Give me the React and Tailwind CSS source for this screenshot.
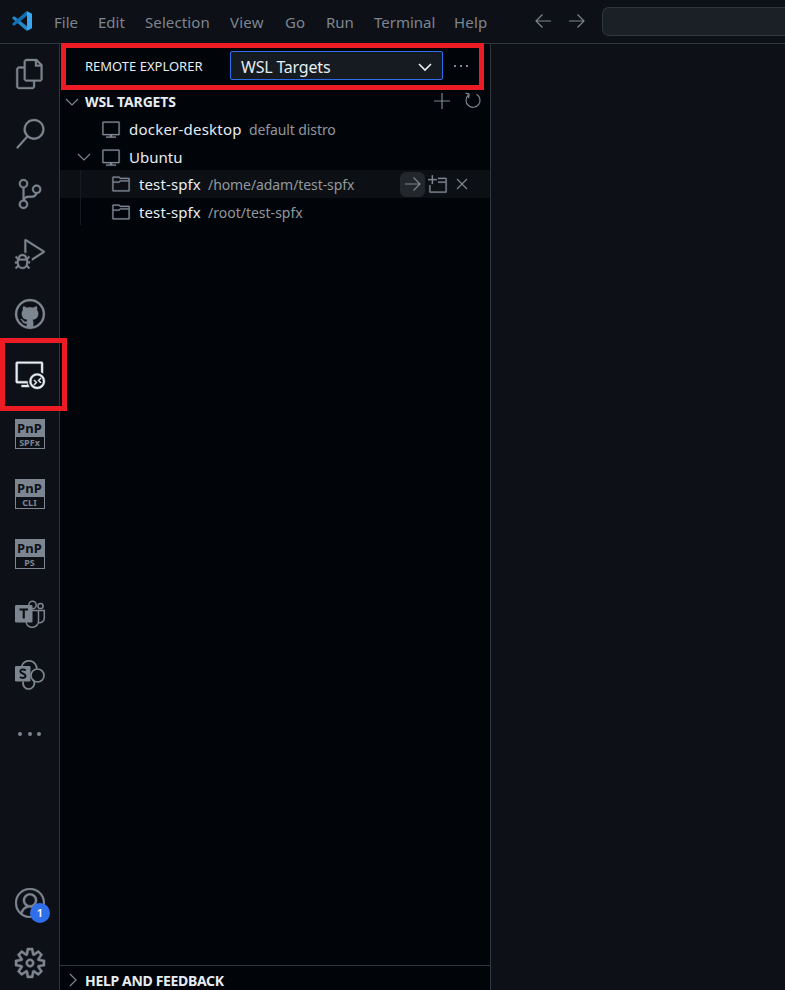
import React from "react";
import {
  VscFiles, VscSearch, VscSourceControl, VscDebugAlt, VscRemoteExplorer, VscAccount,
  VscSettingsGear, VscFolder, VscVm, VscEmptyWindow, VscGithub,
} from "react-icons/vsc";

function Stroke({ d, w = 20, h = 20, sw = 1.2, className = "" }) {
  return (
    <svg width={w} height={h} viewBox={`0 0 ${w} ${h}`} fill="none" stroke="currentColor" strokeWidth={sw} className={`shrink-0 ${className}`}>
      <path d={d} />
    </svg>
  );
}

function Logo() {
  return (
    <svg width="20" height="20" viewBox="0 0 100 100" className="ml-3 -mt-0.5 shrink-0">
      <path fill="#2489ca" d="M1 34 7 28Q10 26 13 28L75 76V98Q71 98 68 95L2 38Q0 36 1 34Z" />
      <path fill="#1070b3" d="M1 66 7 72Q10 74 13 72L75 24V2Q71 2 68 5L2 62Q0 64 1 66Z" />
      <path fill="#3ba7f0" d="M71 99Q75 100 78 98L96 89Q100 87 100 83V17Q100 13 96 11L78 2Q74 0 70 2Q75 1 75 8V92Q75 98 71 99Z" />
    </svg>
  );
}

function Pnp({ label }) {
  return (
    <div className="flex size-[30px] flex-col border border-[#7d8590] bg-[#7d8590] font-bold">
      <div className="h-[17px] text-center text-[13px] leading-[16px] tracking-[0.2px] text-[#0d1117]">PnP</div>
      <div className="h-[11px] bg-[#0d1117] text-center text-[9px] leading-[11px] text-[#7d8590]">{label}</div>
    </div>
  );
}

function Teams() {
  return (
    <svg width="30" height="30" viewBox="0 0 30 30" fill="none" stroke="currentColor" strokeWidth="1.5" className="mt-0.5">
      <circle cx="17.5" cy="5" r="3.7" />
      <circle cx="25.5" cy="6" r="2.6" />
      <path d="M17 10.5H23.5V20.5A6.3 6.3 0 0 1 11 22M23.5 10.5H29.3V18.5A4.5 4.5 0 0 1 23.5 22.5" />
      <rect x="0" y="5" width="17.5" height="17.5" rx="1.3" fill="currentColor" stroke="none" />
      <path d="M4.5 9.5H13M8.75 9.5V18.5" stroke="#0d1117" strokeWidth="2.2" />
    </svg>
  );
}

function SharePoint() {
  return (
    <svg width="30" height="30" viewBox="0 0 30 30" fill="none" stroke="currentColor" strokeWidth="1.7">
      <path d="M6.5 7.5A7.8 7.8 0 0 1 21.8 9.8M8.3 22.5A5.7 5.7 0 1 0 18 20.5" />
      <circle cx="22.5" cy="16.5" r="6.5" />
      <rect x="0" y="7" width="15.5" height="15.5" rx="1.3" fill="currentColor" stroke="none" />
      <path d="M10.8 11.3C8.5 9.9 5.3 10.2 5.3 12.4C5.3 14.9 10.5 14.2 10.5 16.8C10.5 19.2 7 19.4 4.8 18" stroke="#0d1117" strokeWidth="2" />
    </svg>
  );
}

function Activity({ children }) {
  return <div className="flex h-[60px] items-center justify-center [&>svg]:overflow-visible">{children}</div>;
}

const chevronDown = "M1 4 7 10 13 4";
const arrowRight = "M1 8H16M9.5 1.5 16 8 9.5 14.5";

function App() {
  return (
    <div className="relative flex h-[990px] w-[785px] flex-col overflow-hidden bg-[#0d1117] font-['Noto_Sans',sans-serif] text-[#7d8590]">
      <header className="flex h-11 shrink-0 items-center border-b border-[#30363d] text-[15px]">
        <Logo />
        <nav className="flex items-center whitespace-nowrap pt-0.5">
          <span className="ml-[22px] w-11">File</span>
          <span className="w-[47px]">Edit</span>
          <span className="w-[85px] tracking-[0.1px]">Selection</span>
          <span className="w-[55px] tracking-[0.2px]">View</span>
          <span className="w-[41px]">Go</span>
          <span className="w-12">Run</span>
          <span className="w-[80px]">Terminal</span>
          <span className="w-[81px] tracking-[0.2px]">Help</span>
        </nav>
        <Stroke w={17} h={16} className="-mt-px" d="M16 8H1M7.5 1.5 1 8 7.5 14.5" />
        <Stroke w={17} h={16} className="-mt-px ml-4" d={arrowRight} />
        <div className="ml-[17px] h-[29px] flex-1 rounded-l-[7px] border border-r-0 border-[#30363d] bg-[#1b1f26]" />
      </header>

      <div className="flex min-h-0 flex-1">
        <aside className="flex w-[60px] shrink-0 flex-col justify-between border-r border-[#30363d]">
          <div>
            <Activity><VscFiles size={30} strokeWidth={0.25} /></Activity>
            <Activity><VscSearch size={30} strokeWidth={0.25} /></Activity>
            <Activity><VscSourceControl size={30} strokeWidth={0.25} /></Activity>
            <Activity><VscDebugAlt size={30} strokeWidth={0.25} /></Activity>
            <Activity><VscGithub size={30} strokeWidth={0.25} /></Activity>
            <Activity><VscRemoteExplorer size={30} strokeWidth={0.3} className="text-[#e6edf3]" /></Activity>
            <Activity><Pnp label="SPFx" /></Activity>
            <Activity><Pnp label="CLI" /></Activity>
            <Activity><Pnp label="PS" /></Activity>
            <Activity><Teams /></Activity>
            <Activity><SharePoint /></Activity>
            <div className="flex h-[60px] items-center justify-center gap-[5.5px]">
              <i className="size-1 rounded-full bg-[#7d8590]" />
              <i className="size-1 rounded-full bg-[#7d8590]" />
              <i className="size-1 rounded-full bg-[#7d8590]" />
            </div>
          </div>
          <div className="-mb-[3px]">
            <div className="relative flex h-[60px] items-center justify-center">
              <VscAccount size={30} strokeWidth={0.2} />
              <span className="absolute left-[30px] top-[30px] flex size-5 items-center justify-center rounded-full bg-[#2f6feb] text-[11px] font-semibold text-white">1</span>
            </div>
            <Activity><VscSettingsGear size={30} strokeWidth={0.35} /></Activity>
          </div>
        </aside>

        <section className="flex w-[431px] shrink-0 flex-col border-r border-[#30363d] bg-[#010409] text-[15px] whitespace-nowrap">
          <div className="flex h-11 shrink-0 items-center pb-px pl-[25px] text-[#e6edf3]">
            <span className="w-[145px] pt-0.5 text-[13px]">REMOTE EXPLORER</span>
            <div className="flex h-[29px] w-[213px] items-center justify-between rounded-[2px] border border-[#2f6feb] bg-[#161b22] px-2.5">
              <span className="pt-0.5 text-[16px] tracking-[-0.2px]">WSL Targets</span>
              <Stroke w={14} h={14} sw={1.6} className="mt-0.5" d={chevronDown} />
            </div>
            <div className="ml-[11px] flex gap-1 text-[#7d8590]">
              <i className="size-[2px] bg-current" /><i className="size-[2px] bg-current" /><i className="size-[2px] bg-current" />
            </div>
          </div>
          <div className="flex h-[27px] shrink-0 items-center pl-[5px]">
            <Stroke w={14} h={14} d={chevronDown} />
            <span className="ml-1.5 w-[349px] text-[14px] font-bold tracking-[-0.15px] text-[#e6edf3]">WSL TARGETS</span>
            <Stroke w={16} h={16} className="-mt-0.5" d="M8 0V16M0 8H16" />
            <Stroke w={18} h={18} className="-mt-0.5 ml-3.5" d="M4.2 3.2A7 7 0 1 0 12.5 2.2M1.5 1.2 5.2 2.2 4.5 6.2M5 1.5H1.5" />
          </div>
          <div className="flex h-[28px] shrink-0 items-center pl-[41px]">
            <VscVm size={20} strokeWidth={0.2} />
            <span className="ml-2 w-[120px] tracking-[0.22px] text-[#e6edf3]">docker-desktop</span>
            <span className="text-[14px] tracking-[-0.1px] text-[#92979d]">default distro</span>
          </div>
          <div className="flex h-[27px] shrink-0 items-center pl-[17px]">
            <Stroke w={14} h={14} d={chevronDown} />
            <VscVm size={20} strokeWidth={0.2} className="ml-2.5" />
            <span className="ml-2 pt-px text-[#e6edf3]">Ubuntu</span>
          </div>
          <div className="flex h-[28px] shrink-0 items-center bg-[#0c1015] pl-5">
            <i className="h-full w-px bg-[#161b22]" />
            <VscFolder size={20} strokeWidth={0.2} className="ml-[30px]" />
            <span className="ml-2 w-[69px] tracking-[0.12px] text-[#e6edf3]">test-spfx</span>
            <span className="w-[192px] text-[14px] tracking-[-0.08px] text-[#92979d]">/home/adam/test-spfx</span>
            <div className="flex size-[25px] items-center justify-center rounded-md bg-[#23272c]">
              <Stroke w={17} h={16} d={arrowRight} />
            </div>
            <VscEmptyWindow size={20} strokeWidth={0.2} className="ml-[3px]" />
            <Stroke w={12} h={12} className="ml-2" d="M1 1 11 11M11 1 1 11" />
          </div>
          <div className="flex h-[27px] shrink-0 items-center pl-5">
            <i className="h-full w-px bg-[#161b22]" />
            <VscFolder size={20} strokeWidth={0.2} className="ml-[30px]" />
            <span className="ml-2 w-[69px] pt-px tracking-[0.12px] text-[#e6edf3]">test-spfx</span>
            <span className="pt-px text-[14px] text-[#92979d]">/root/test-spfx</span>
          </div>
          <div className="mt-auto flex h-[25px] shrink-0 items-center overflow-hidden border-t border-[#30363d] pl-[5px] pt-1">
            <Stroke w={14} h={14} d="M5 1 11 7 5 13" />
            <span className="ml-1.5 text-[14px] font-bold tracking-[-0.33px] text-[#e6edf3]">HELP AND FEEDBACK</span>
          </div>
        </section>
        <main className="flex-1" />
      </div>

      <div className="absolute left-[61px] top-[43px] h-[47px] w-[423px] border-[5px] border-[#ed1c24]" />
      <div className="absolute left-0 top-[338px] h-[73px] w-[67px] border-[5px] border-[#ed1c24]" />
    </div>
  );
}

export default App;
